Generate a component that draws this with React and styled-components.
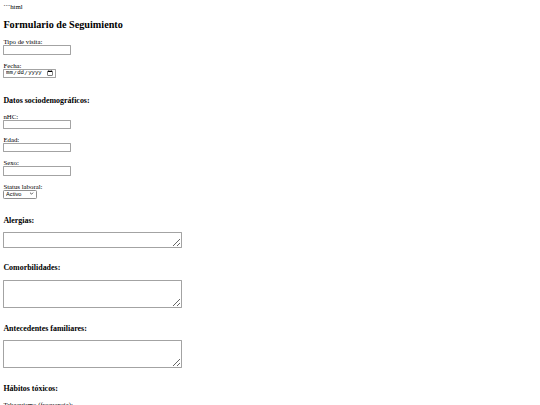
import { styled, createGlobalStyle } from "styled-components"
import { ChevronDown } from "lucide-react"

const GlobalStyle = createGlobalStyle`
  html {
    zoom: 0.425;
  }
  body {
    margin: 8px;
    font-family: "Liberation Serif", "Times New Roman", serif;
    font-size: 16px;
    color: #000;
    background: #fff;
  }
`

const Page = styled.div`
`
const Title = styled.h2`
  font-size: 1.5em;
  margin: 0.83em 0;
`
const Section = styled.h3`
  font-size: 1.17em;
  margin: ${(p) => p.$top || 18}px 0 18px;
`
const Label = styled.label`
`
const Field = styled.input`
  box-sizing: border-box;
  width: ${(p) => (p.type === "date" ? "123px" : "158px")};
  height: 22px;
  margin: 0;
  padding: 1px 3px;
  border: 1px solid #a3a3a3;
  border-radius: 1px;
  background: #fff;
  font-family: ${(p) => (p.type === "date" ? '"Liberation Mono", monospace' : '"Liberation Sans", Arial, sans-serif')};
  font-size: 13.33px;
  color: #000;
`
const SelectWrap = styled.span`
  position: relative;
  display: inline-block;
  vertical-align: baseline;
`
const Select = styled.select`
  appearance: none;
  box-sizing: border-box;
  width: 78px;
  height: 21px;
  margin: 0;
  padding: 0 18px 0 4px;
  border: 1px solid #8f8f8f;
  border-radius: 3px;
  background: #fff;
  font-family: "Liberation Sans", Arial, sans-serif;
  font-size: 13.33px;
  color: #000;
`
const Arrow = styled(ChevronDown)`
  position: absolute;
  right: 5px;
  top: 4px;
  pointer-events: none;
`
const Area = styled.textarea`
  box-sizing: border-box;
  width: 421px;
  height: ${(p) => (p.rows > 2 ? "66px" : "36px")};
  margin: 0;
  padding: 2px;
  border: 1px solid #a3a3a3;
  border-radius: 1px;
  font-family: "Liberation Mono", monospace;
  font-size: 13.33px;
`

function Input({ label, type = "text" }) {
  return (
    <>
      <Label>{label}</Label><br />
      <Field type={type} /><br /><br />
    </>
  )
}

function Block({ title, rows, top }) {
  return (
    <>
      <Section $top={top}>{title}</Section>
      <Area rows={rows} /><br /><br />
    </>
  )
}

function App() {
  return (
    <Page>
      <GlobalStyle />
      ```html
      <Title>Formulario de Seguimiento</Title>
      <form>
        <Input label="Tipo de visita:" />
        <Input label="Fecha:" type="date" />

        <Section $top={26}>Datos sociodemográficos:</Section>
        <Input label="nHC:" />
        <Input label="Edad:" />
        <Input label="Sexo:" />
        <Label>Status laboral:</Label><br />
        <SelectWrap>
          <Select defaultValue="Activo">
            <option>Activo</option>
            <option>Baja</option>
            <option>Jubilado</option>
            <option>Desempleado</option>
          </Select>
          <Arrow size={12} strokeWidth={3} />
        </SelectWrap><br /><br />

        <Block title="Alergias:" rows={2} top={24} />
        <Block title="Comorbilidades:" rows={4} />
        <Block title="Antecedentes familiares:" rows={4} />

        <Section>Hábitos tóxicos:</Section>
        <Input label="Tabaquismo (frecuencia):" />
        <Input label="Alcohol (frecuencia):" />
      </form>
    </Page>
  )
}

export default App
